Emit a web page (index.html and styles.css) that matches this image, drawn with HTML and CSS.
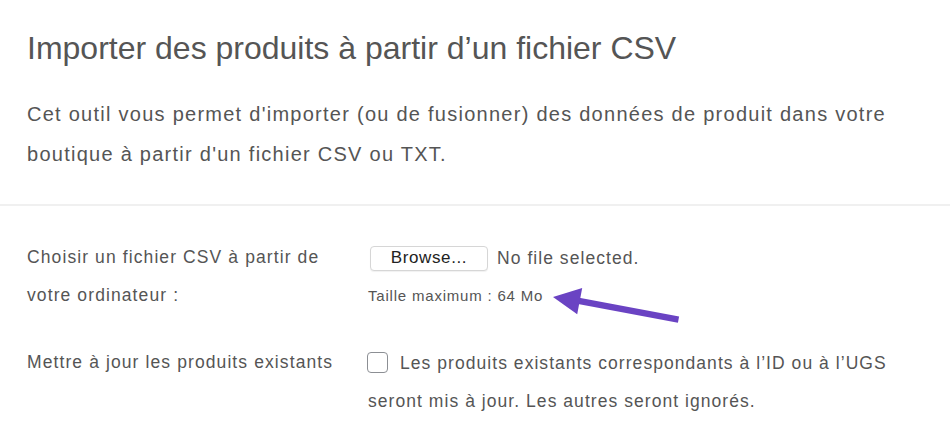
FILE: index.html
```html
<!DOCTYPE html>
<html lang="fr">
<head>
<meta charset="utf-8">
<title>Importer des produits</title>
<link rel="stylesheet" href="styles.css">
</head>
<body>
<div class="page">
  <header class="intro">
    <h1 class="title">Importer des produits à partir d’un fichier CSV</h1>
    <p class="lead">Cet outil vous permet d'importer (ou de fusionner) des données de produit dans votre boutique à partir d'un fichier CSV ou TXT.</p>
  </header>
  <section class="form">
    <div class="label">Choisir un fichier CSV à partir de votre ordinateur :</div>
    <div class="field">
      <div class="file-line"><span class="browse">Browse...</span><span class="nofile">No file selected.</span></div>
      <div class="hint">Taille maximum : 64 Mo</div>
    </div>
    <div class="label">Mettre à jour les produits existants</div>
    <div class="field">
      <p class="check-desc"><span class="checkbox"></span>Les produits existants correspondants à l’ID ou à l’UGS seront mis à jour. Les autres seront ignorés.</p>
    </div>
  </section>
  <svg class="arrow" width="950" height="448" viewBox="0 0 950 448" aria-hidden="true">
    <line x1="576" y1="300.4" x2="678.5" y2="319.6" stroke="#6a43c3" stroke-width="6.5"/>
    <polygon points="553,297 582.2,288 577.2,314.2" fill="#6a43c3"/>
  </svg>
</div>
</body>
</html>
```
FILE: styles.css
```css
html, body {
  margin: 0;
  padding: 0;
  background: #ffffff;
}
body {
  font-family: "Liberation Sans", Arial, sans-serif;
  color: #555555;
}
.page {
  position: relative;
  width: 950px;
  height: 448px;
  overflow: hidden;
}
.intro {
  padding: 29px 27px 30px 27px;
  border-bottom: 2px solid #f0f0f0;
}
.title {
  margin: 0;
  font-size: 32px;
  font-weight: 400;
  line-height: 38.4px;
  color: #555555;
}
.lead {
  margin: 28px 0 0 0;
  font-size: 20px;
  line-height: 39.5px;
  letter-spacing: 1.26px;
  color: #555555;
}
.form {
  display: grid;
  grid-template-columns: 341px 1fr;
  row-gap: 30px;
  padding: 33px 27px 0 27px;
}
.label {
  font-size: 17.5px;
  line-height: 37.5px;
  letter-spacing: 1.1px;
  padding-right: 20px;
}
.file-line {
  display: flex;
  align-items: center;
  height: 37.5px;
  font-size: 17.5px;
  letter-spacing: 1.05px;
}
.browse {
  box-sizing: border-box;
  display: inline-flex;
  align-items: center;
  justify-content: center;
  width: 118px;
  height: 25px;
  margin-left: 2px;
  margin-right: 9px;
  border: 1px solid #d6d6d6;
  border-radius: 4px;
  background: #ffffff;
  box-shadow: 0 1px 1px rgba(0, 0, 0, 0.06);
  color: #222222;
  font-size: 17px;
  letter-spacing: 0.6px;
}
.nofile {
  color: #555555;
}
.hint {
  font-size: 15px;
  line-height: 37.5px;
  letter-spacing: 0.8px;
  color: #555555;
}
.check-desc {
  margin: 0;
  font-size: 17.5px;
  line-height: 38px;
  letter-spacing: 1.05px;
  padding-right: 20px;
}
.checkbox {
  display: inline-block;
  box-sizing: border-box;
  width: 21px;
  height: 21px;
  margin: 0 12px 0 -1px;
  vertical-align: -4px;
  border: 1.5px solid #8c8f94;
  border-radius: 4px;
  background: #ffffff;
}
.arrow {
  position: absolute;
  left: 0;
  top: 0;
  pointer-events: none;
}
```
